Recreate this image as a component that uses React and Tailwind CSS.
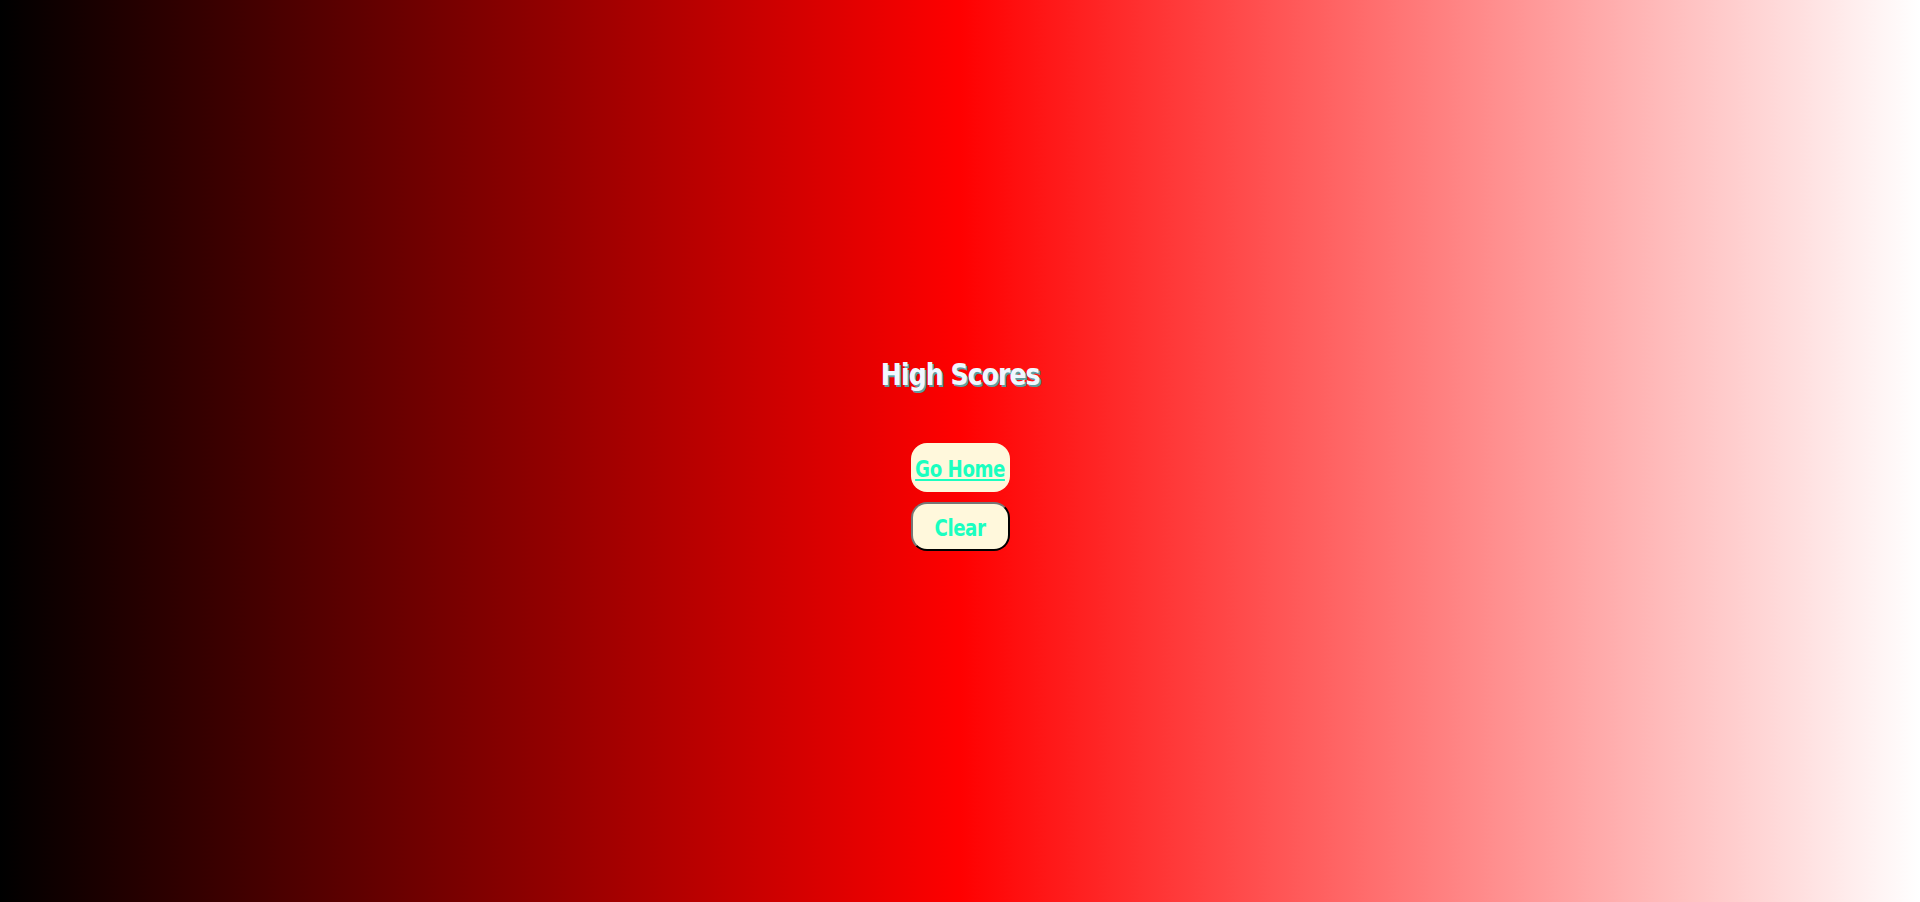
import React from 'react';

const font = { fontFamily: "Impact, 'DejaVu Sans', sans-serif", fontStretch: 'condensed' };

const App = () => {
  return (
    <div
      className="min-h-screen w-full flex flex-col items-center justify-center bg-[linear-gradient(to_right,#000000,#ff0000,#ffffff)]"
      style={font}
    >
      {/* Title */}
      <h1 className="mt-[4px] text-[31px] font-bold leading-[38px] text-[#f0f8ff] [text-shadow:2px_2px_0_#5f9ea0] tracking-[-1px] whitespace-nowrap">
        <span className="inline-block scale-x-[0.9]">High Scores</span>
      </h1>

      <div className="mt-[50px] flex flex-col items-center gap-[10px]">
        <a
          href="#"
          className="flex items-center justify-center w-[99px] h-[49px] pt-[3px] rounded-[16px] bg-[#fff8dc] text-[#1affc0] text-[23px] font-bold whitespace-nowrap tracking-[-0.5px]"
        >
          <span className="inline-block scale-x-[0.88] underline decoration-2 underline-offset-2">Go Home</span>
        </a>
        <button className="w-[99px] h-[49px] pt-[4px] rounded-[16px] bg-[#fff8dc] text-[#1affc0] text-[23px] font-bold whitespace-nowrap tracking-[-0.5px] border-2 border-t-[#767676] border-l-[#767676] border-r-[#000000] border-b-[#000000]">
          <span className="inline-block scale-x-[0.88]">Clear</span>
        </button>
      </div>
    </div>
  );
};

export default App;
